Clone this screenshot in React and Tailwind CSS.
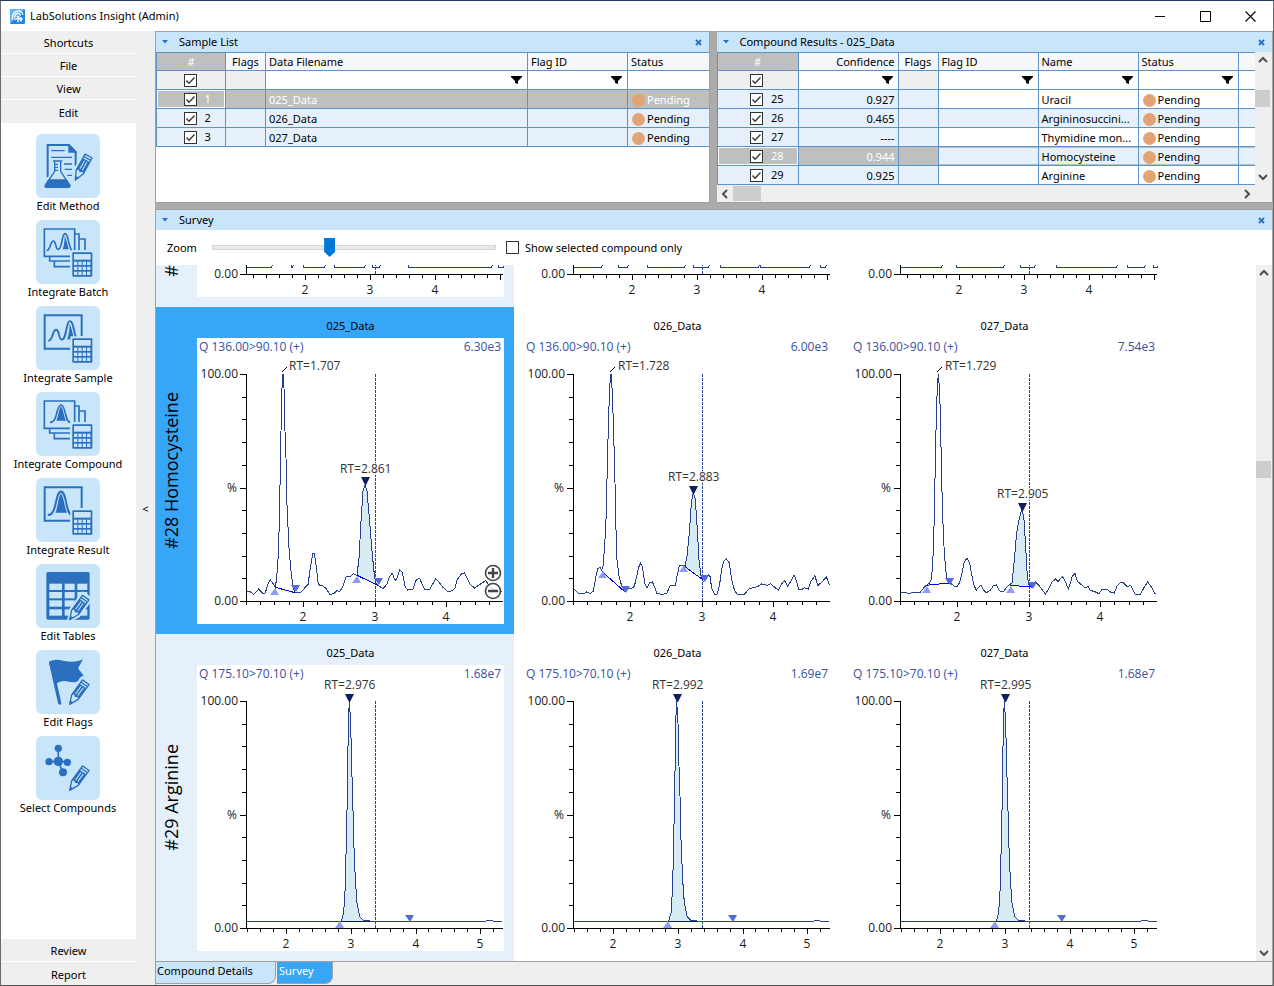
import React, { useState } from 'react';

const TILE = '#c8e5fa';
const INK = '#2b70bf';

/* ---------- Sidebar icons ---------- */

const Pencil = ({ transform }) => (
  <g transform={transform}>
    <path d="M0 0 L-13 -26 V-86 H13 V-26 Z" fill={TILE} stroke={TILE} strokeWidth="14" strokeLinejoin="round" />
    <path d="M0 0 L-12 -27 V-82 H12 V-27 Z" fill={TILE} stroke={INK} strokeWidth="4" strokeLinejoin="round" />
    <path d="M-12 -27 V-68 H12 V-27 L6 -32 L0 -27 L-6 -32 Z" fill={INK} />
    <path d="M-4 -36 V-64 M4 -36 V-64" stroke={TILE} strokeWidth="3" />
    <path d="M-12 -74 H12" stroke={INK} strokeWidth="4" />
    <path d="M0 2 L-6 -11 H6 Z" fill={INK} />
  </g>
);

const Calculator = () => (
  <g>
    <rect x="103" y="91" width="72" height="84" fill={TILE} />
    <rect x="109" y="97" width="60" height="73" rx="3" fill={INK} />
    <rect x="114" y="102" width="50" height="17" fill={TILE} />
    {[125, 140, 155].map((y) =>
      [114, 127, 140, 153].map((x) => (
        <rect key={`${x}-${y}`} x={x} y={y} width="10" height="10" fill={TILE} />
      ))
    )}
  </g>
);

const StackFrame = () => (
  <g fill="none" stroke={INK} strokeWidth="5">
    <path d="M102 109 H25 V27 H116 V90" />
    <path d="M116 42 H129 V90 M129 57 H147 V90" />
    <path d="M41 111 V123 H102 M55 125 V140 H102" />
  </g>
);

const SingleFrame = () => (
  <path d="M102 128 H26 V28 H137 V90" fill="none" stroke={INK} strokeWidth="6" />
);

const TwoPeaks = ({ transform }) => (
  <g transform={transform}>
    <path
      d="M32 91 C44 92 42 63 52 63 C61 63 58 88 66 88 C80 88 76 41 87 41 C98 41 96 80 108 92"
      fill="none"
      stroke={INK}
      strokeWidth="5"
    />
    <path d="M86 47 C91 57 95 75 98 88 L80 88 C85 74 86 60 86 47 Z" fill={INK} />
  </g>
);

const OnePeak = ({ transform }) => (
  <g transform={transform}>
    <path
      d="M42 91 C66 92 60 39 75 39 C90 39 86 91 103 91"
      fill="none"
      stroke={INK}
      strokeWidth="5"
    />
    <path d="M75 43 C82 52 84 75 90 86 L61 86 C67 75 68 52 75 43 Z" fill={INK} />
  </g>
);

const icons = {
  method: (
    <g>
      <path d="M35 130 V33 H99 L119 54 V96" fill="none" stroke={INK} strokeWidth="6" />
      <path d="M97 30 L122 56 H97 Z" fill={INK} />
      <path
        d="M46 50 H86 M46 70 H108 M84 90 H108 M86 106 H108 M94 124 H108"
        stroke={INK}
        strokeWidth="4"
      />
      <path d="M54 82 H75 V112 L100 152 V160 H30 V152 L54 112 Z" fill={TILE} stroke={TILE} strokeWidth="12" />
      <path d="M56 82 V112 L30 151 H99 L74 112 V82" fill={TILE} stroke={INK} strokeWidth="4" />
      <path d="M51 81 H79 M56 91 H66 M56 100 H66 M56 109 H66" stroke={INK} strokeWidth="4" />
      <path d="M37 136 H92 L104 154 Q105 162 97 162 H32 Q23 162 26 154 Z" fill={INK} />
      <Pencil transform="translate(118 138) rotate(29)" />
    </g>
  ),
  batch: (
    <g>
      <StackFrame />
      <TwoPeaks />
      <Calculator />
    </g>
  ),
  sample: (
    <g>
      <SingleFrame />
      <TwoPeaks transform="translate(-1 -3) scale(1.18)" />
      <Calculator />
    </g>
  ),
  compound: (
    <g>
      <StackFrame />
      <OnePeak />
      <Calculator />
    </g>
  ),
  result: (
    <g>
      <SingleFrame />
      <OnePeak transform="translate(-15 -12) scale(1.2 1.35)" />
      <Calculator />
    </g>
  ),
  tables: (
    <g>
      <rect x="31" y="24" width="130" height="143" rx="5" fill={INK} />
      {[59, 84, 109, 136].map((y) =>
        [40, 86, 124].map((x) => (
          <rect key={`${x}-${y}`} x={x} y={y} width={x === 40 ? 38 : 30} height="19" fill={TILE} />
        ))
      )}
      <Pencil transform="translate(101 167) rotate(36)" />
    </g>
  ),
  flags: (
    <g>
      <path d="M44 38 L71 159" stroke={INK} strokeWidth="10" strokeLinecap="round" />
      <path
        d="M39 37 C66 14 92 50 141 28 L126 55 L144 78 C124 80 134 98 112 97 C94 97 82 85 58 103 Z"
        fill={INK}
      />
      <Pencil transform="translate(101 163) rotate(36)" />
    </g>
  ),
  compounds: (
    <g>
      <path d="M67 37 V76 M39 77 H94 M67 76 L81 109" stroke={INK} strokeWidth="5" />
      <g fill={INK}>
        <circle cx="67" cy="37" r="11" />
        <circle cx="39" cy="77" r="11" />
        <circle cx="67" cy="76" r="14" />
        <circle cx="94" cy="79" r="11" />
        <circle cx="81" cy="109" r="12" />
      </g>
      <Pencil transform="translate(101 163) rotate(36)" />
    </g>
  ),
};

const shortcuts = [
  { label: 'Edit Method', icon: 'method' },
  { label: 'Integrate Batch', icon: 'batch' },
  { label: 'Integrate Sample', icon: 'sample' },
  { label: 'Integrate Compound', icon: 'compound' },
  { label: 'Integrate Result', icon: 'result' },
  { label: 'Edit Tables', icon: 'tables' },
  { label: 'Edit Flags', icon: 'flags' },
  { label: 'Select Compounds', icon: 'compounds' },
];

/* ---------- Small shared parts ---------- */

const Checkbox = ({ id, label, defaultChecked = false }) => {
  const [checked, setChecked] = useState(defaultChecked);
  return (
    <span className="relative block h-[13px] w-[13px]">
      <input
        id={id}
        type="checkbox"
        aria-label={label}
        checked={checked}
        onChange={(e) => setChecked(e.target.checked)}
        className="block h-[13px] w-[13px] appearance-none border border-[#333333] bg-white"
      />
      {checked && (
        <svg className="pointer-events-none absolute inset-0" width="13" height="13" viewBox="0 0 13 13">
          <path d="M2.5 6.5 L5 9.2 L10.5 3.5" fill="none" stroke="#333333" strokeWidth="1.3" />
        </svg>
      )}
    </span>
  );
};

const FilterButton = ({ label }) => (
  <button type="button" aria-label={label} className="block">
    <svg width="11" height="9" viewBox="0 0 11 9">
      <path d="M0 0 H11 V1 L7 5 V8 L4 7 V5 L0 1 Z" fill="#000000" />
    </svg>
  </button>
);

const Status = ({ children }) => (
  <span className="flex items-center gap-0.5">
    <span className="h-[13px] w-[13px] rounded-full bg-[#e2a375]" />
    {children}
  </span>
);

const PanelHeader = ({ title }) => (
  <div className="flex h-5 shrink-0 items-center bg-[#c8e5fa] pr-[7px] pl-1.5">
    <svg width="6" height="4" viewBox="0 0 6 4">
      <path d="M0 0 H6 L3 3.5 Z" fill="#2b70bf" />
    </svg>
    <h2 className="ml-[11px] flex-1">{title}</h2>
    <button type="button" aria-label={`Close ${title}`}>
      <svg width="7" height="7" viewBox="0 0 7 7">
        <path d="M1 1 L6 6 M6 1 L1 6" stroke="#2b70bf" strokeWidth="1.8" />
      </svg>
    </button>
  </div>
);

const arrows = {
  up: 'M1 7 L5 3 L9 7',
  down: 'M1 3 L5 7 L9 3',
  left: 'M7 1 L3 5 L7 9',
  right: 'M3 1 L7 5 L3 9',
};

const ScrollArrow = ({ dir }) => (
  <button type="button" aria-label={`Scroll ${dir}`} className="flex h-4 w-4 shrink-0 items-center justify-center">
    <svg width="10" height="10" viewBox="0 0 10 10">
      <path d={arrows[dir]} fill="none" stroke="#505050" strokeWidth="2" />
    </svg>
  </button>
);

/* ---------- Tables ---------- */

const cell = 'border-r border-b border-[#5b93cc] p-0 font-normal whitespace-nowrap';
const headCell = `${cell} h-[18px] bg-[#f5f7f9]`;

const IndexCell = ({ n, selected }) => (
  <td className={`${cell} h-[19px] ${selected ? 'bg-[#bfbfbf] text-white inset-ring inset-ring-white' : 'bg-[#e5f0fa]'}`}>
    <div className="grid grid-cols-[1fr_auto_1fr] items-center pr-0.5">
      <span />
      <Checkbox label={`Select row ${n}`} defaultChecked />
      <span className="pl-2 leading-4">{n}</span>
    </div>
  </td>
);

const FilterCell = ({ name, filter = true }) => (
  <td className={`${cell} h-[19px] bg-white`}>
    <div className="flex justify-end pr-[5px]">{filter && <FilterButton label={`Filter ${name}`} />}</div>
  </td>
);

const IndexFilterCell = () => (
  <td className={`${cell} h-[19px] bg-[#efefef]`}>
    <div className="flex justify-center pr-0.5">
      <Checkbox label="Select all" defaultChecked />
    </div>
  </td>
);

const samples = [
  { n: 1, file: '025_Data', selected: true },
  { n: 2, file: '026_Data' },
  { n: 3, file: '027_Data' },
];

const SampleTable = () => (
  <table className="w-full table-fixed border-separate border-spacing-0 border-t border-l border-[#5b93cc] text-left leading-4">
    <colgroup>
      <col className="w-[69px]" />
      <col className="w-10" />
      <col className="w-[262px]" />
      <col className="w-[100px]" />
      <col />
    </colgroup>
    <thead>
      <tr>
        <th className={`${cell} h-[18px] bg-[#bfbfbf] text-center text-white`}>#</th>
        <th className={`${headCell} text-center`}>Flags</th>
        <th className={`${headCell} pl-[3px]`}>Data Filename</th>
        <th className={`${headCell} pl-[3px]`}>Flag ID</th>
        <th className={`${headCell} border-r-0 pl-[3px]`}>Status</th>
      </tr>
    </thead>
    <tbody>
      <tr>
        <IndexFilterCell />
        <td className={`${cell} bg-[#efefef]`} />
        <FilterCell name="Data Filename" />
        <FilterCell name="Flag ID" />
        <td className={`${cell} border-r-0 bg-white`} />
      </tr>
      {samples.map((row) => (
        <tr key={row.n} className={row.selected ? 'bg-[#bfbfbf] text-white' : 'bg-[#e5f0fa]'}>
          <IndexCell n={row.n} selected={row.selected} />
          <td className={cell} />
          <td className={`${cell} pt-0.5 pl-[3px]`}>{row.file}</td>
          <td className={cell} />
          <td className={`${cell} border-r-0 pt-0.5 pl-1`}>
            <Status>Pending</Status>
          </td>
        </tr>
      ))}
    </tbody>
  </table>
);

const compounds = [
  { n: 25, confidence: '0.927', name: 'Uracil' },
  { n: 26, confidence: '0.465', name: 'Argininosuccini...' },
  { n: 27, confidence: '----', name: 'Thymidine mon...' },
  { n: 28, confidence: '0.944', name: 'Homocysteine', selected: true },
  { n: 29, confidence: '0.925', name: 'Arginine' },
];

const CompoundTable = () => (
  <table className="w-full table-fixed border-separate border-spacing-0 border-t border-l border-[#5b93cc] text-left leading-4">
    <colgroup>
      <col className="w-[81px]" />
      <col className="w-[100px]" />
      <col className="w-10" />
      <col className="w-[100px]" />
      <col className="w-[100px]" />
      <col className="w-[100px]" />
      <col />
    </colgroup>
    <thead>
      <tr>
        <th className={`${cell} h-[18px] bg-[#bfbfbf] text-center text-white`}>#</th>
        <th className={`${headCell} pr-[3px] text-right`}>Confidence</th>
        <th className={`${headCell} text-center`}>Flags</th>
        <th className={`${headCell} pl-[3px]`}>Flag ID</th>
        <th className={`${headCell} pl-[3px]`}>Name</th>
        <th className={`${headCell} pl-[3px]`}>Status</th>
        <th className={`${headCell} border-r-0`} />
      </tr>
    </thead>
    <tbody>
      <tr>
        <IndexFilterCell />
        <FilterCell name="Confidence" />
        <td className={`${cell} bg-[#efefef]`} />
        <FilterCell name="Flag ID" />
        <FilterCell name="Name" />
        <FilterCell name="Status" />
        <td className={`${cell} border-r-0 bg-white`} />
      </tr>
      {compounds.map((row, i) => {
        const fixed = row.selected ? 'bg-[#bfbfbf] text-white' : 'bg-[#e5f0fa]';
        const body = i % 2 ? 'bg-[#e5f0fa]' : 'bg-white';
        const edge = row.selected ? 'shadow-[inset_0_1px_#bfbfbf,inset_0_-1px_#bfbfbf]' : '';
        return (
          <tr key={row.n}>
            <IndexCell n={row.n} selected={row.selected} />
            <td className={`${cell} ${fixed} pt-0.5 pr-[3px] text-right`}>{row.confidence}</td>
            <td className={`${cell} ${fixed}`} />
            <td className={`${cell} ${body} ${edge}`} />
            <td className={`${cell} ${body} ${edge} overflow-hidden pt-0.5 pl-[3px]`}>{row.name}</td>
            <td className={`${cell} ${body} ${edge} pt-0.5 pl-1`}>
              <Status>Pending</Status>
            </td>
            <td className={`${cell} ${body} ${edge} border-r-0`} />
          </tr>
        );
      })}
    </tbody>
  </table>
);

/* ---------- Chromatograms ---------- */

// Plot area inside the 307 x 286 chart box
const LEFT = 49;
const TOP = 36;
const BASE = 263;
const RIGHT = 306;
const HEIGHT = 286;

// Traces are stored as x,y pairs at three units per pixel, from the given origin
const toPoints = (trace) => {
  const values = trace.data.split(' ').map((pair) => pair.split(',').map(Number));
  return values.map(([x, y]) => [LEFT + (x - trace.x0) / 3, BASE - (trace.y0 - y) / 3]);
};

const toPath = (points) => `M${points.map((p) => p.join(' ')).join(' L')}`;

const homocysteine = [
  {
    file: '025_Data',
    scale: '6.30e3',
    selected: true,
    trace: {
      x0: 289,
      y0: 739,
      data: '289,711 298,709 312,719 320,711 327,703 340,717 347,715 354,690 361,675 368,683 377,698 381,670 386,600 389,500 392,340 394,230 397,100 400,58 403,100 406,230 409,310 412,450 418,580 424,650 431,700 436,714 442,713 455,712 465,700 475,690 482,640 489,597 494,596 499,630 506,690 520,694 530,702 540,719 553,717 562,708 570,711 580,695 590,665 603,665 612,657 622,662 628,610 634,500 640,410 646,390 652,410 660,500 667,590 674,660 678,685 685,692 700,702 712,688 718,670 727,655 737,678 742,670 750,646 758,652 766,695 774,706 790,703 800,675 810,671 818,690 825,705 840,704 848,690 858,673 868,682 880,698 892,709 905,709 916,701 922,675 935,658 944,655 950,665 962,690 975,700 990,690 1008,678 1025,700 1045,712 1057,710',
      fill: [622, 682],
    },
    baselines: [[377, 698, 436, 714], [622, 662, 685, 692]],
    marks: [['start', 77, 250], ['end', 98, 247], ['start', 159, 238], ['end', 181, 240]],
    leader: 86,
    labels: [{ x: 92, y: 32, rt: '1.707' }, { x: 143, y: 135, rt: '2.861' }],
    apex: [168, 139],
  },
  {
    file: '026_Data',
    scale: '6.00e3',
    trace: {
      x0: 176,
      y0: 904,
      data: '176,866 183,872 192,882 208,883 217,877 228,881 237,875 245,830 250,808 257,802 262,812 266,800 271,740 275,660 279,500 281,420 284,320 287,250 290,222 294,280 298,400 302,550 304,660 308,780 314,830 321,855 330,875 338,868 350,867 360,860 366,835 372,805 379,790 385,805 391,850 398,866 406,848 414,847 420,860 428,882 445,884 458,880 466,860 474,856 483,857 489,825 495,798 505,797 512,798 518,770 525,700 531,610 537,577 543,600 549,690 554,780 560,830 567,845 575,838 581,825 587,830 592,865 600,883 608,883 615,860 622,810 628,785 636,778 645,790 652,840 660,870 668,883 690,884 705,867 730,861 742,853 758,857 768,852 778,860 792,872 800,855 810,842 820,860 829,845 839,825 845,840 853,870 862,870 870,864 882,868 890,845 902,828 910,858 925,845 936,831 945,855',
      fill: [510, 562],
    },
    baselines: [[262, 815, 330, 875], [508, 798, 565, 840]],
    marks: [['start', 78, 233], ['end', 101, 248], ['start', 159, 227], ['end', 180, 237]],
    leader: 87,
    labels: [{ x: 94, y: 32, rt: '1.728' }, { x: 144, y: 143, rt: '2.883' }],
    apex: [169, 148],
  },
  {
    file: '027_Data',
    scale: '7.54e3',
    trace: {
      x0: 181,
      y0: 904,
      data: '181,877 195,878 205,881 225,879 240,880 252,865 260,857 270,850 276,835 280,770 284,650 287,480 290,350 293,260 296,222 300,275 303,380 305,500 309,650 313,740 318,810 323,845 328,850 336,853 345,860 352,862 360,848 366,825 373,790 382,774 390,790 396,825 404,860 410,871 424,856 432,872 440,879 452,872 462,857 470,856 480,874 490,877 502,862 510,855 517,850 524,780 531,700 538,660 547,625 553,660 558,740 563,830 568,855 576,862 587,846 596,855 606,868 617,883 627,868 636,848 648,838 656,846 663,835 670,831 677,845 686,868 692,850 698,830 706,821 713,845 725,855 736,865 745,860 752,872 765,876 778,882 787,870 800,868 815,879 824,880 832,860 842,848 852,850 862,860 873,858 886,883 902,884 914,862 924,847 934,860 945,880 950,884',
      fill: [510, 576],
    },
    baselines: [[258, 857, 330, 850], [512, 857, 576, 862]],
    marks: [['start', 75, 248], ['end', 98, 240], ['start', 159, 248], ['end', 181, 244]],
    leader: 87,
    labels: [{ x: 94, y: 32, rt: '1.729' }, { x: 146, y: 160, rt: '2.905' }],
    apex: [171, 165],
  },
];

const ARGININE =
  '289,844 575,844 582,820 587,740 590,600 593,470 596,250 599,184 603,250 606,380 609,470 612,600 617,720 622,790 630,830 640,841 660,844 1010,844 1020,841 1030,844 1056,844';

const arginine = [
  { file: '025_Data', scale: '1.68e7', x0: 289, start: 142, end: 212, label: 127, rt: '2.976', apex: 152 },
  { file: '026_Data', scale: '1.69e7', x0: 288, start: 143, end: 208, label: 128, rt: '2.992', apex: 153 },
  { file: '027_Data', scale: '1.68e7', x0: 286, start: 143, end: 210, label: 129, rt: '2.995', apex: 154 },
].map((c) => ({
  ...c,
  trace: { x0: c.x0, y0: 865, data: ARGININE, fill: [575, 660] },
  baselines: [[575, 844, 660, 844]],
  marks: [['start', c.start, 256], ['end', c.end, 250]],
  labels: [{ x: c.label, y: 24, rt: c.rt }],
  apex: [c.apex, 29],
}));

// Only the floor of the signal, given as [from, to] spans
const thymidine = [
  { file: '025_Data', floor: [[49, 74], [94, 95], [106, 127], [137, 167], [175, 182], [211, 294], [301, 306]] },
  { file: '026_Data', floor: [[49, 77], [94, 103], [123, 160], [169, 184], [196, 234], [236, 285], [296, 301]] },
  { file: '027_Data', floor: [[49, 90], [105, 152], [169, 183], [205, 265], [276, 293], [302, 306]] },
];

const rows = [
  {
    title: '#',
    charts: thymidine,
    // scrolled under the toolbar, only the foot of the charts shows
    visible: 32,
    axis: { origin: 108, step: 13, first: 4, labels: [2, 3, 4] },
  },
  {
    title: '#28 Homocysteine',
    transition: 'Q 136.00>90.10 (+)',
    charts: homocysteine,
    selected: true,
    axis: { origin: 106, step: 14.3, first: 4, labels: [2, 3, 4] },
  },
  {
    title: '#29 Arginine',
    transition: 'Q 175.10>70.10 (+)',
    charts: arginine,
    axis: { origin: 89, step: 12.95, first: 3, labels: [2, 3, 4, 5] },
  },
];

const Mark = ({ kind, x, y }) =>
  kind === 'start' ? (
    <path d={`M${x - 4} ${y + 7} L${x + 1} ${y} L${x + 5} ${y + 7} Z`} fill="#8c9cf8" />
  ) : (
    <path d={`M${x - 4} ${y} L${x + 5} ${y} L${x + 1} ${y + 7} Z`} fill="#5468d8" />
  );

const Axis = ({ axis, partial }) => {
  const ticks = [];
  for (let i = -axis.first; axis.origin + i * axis.step <= RIGHT; i++) {
    ticks.push({ x: Math.round(axis.origin + i * axis.step) + 0.5, major: i % 5 === 0 });
  }
  return (
    <g>
      <g stroke="#000000" shapeRendering="crispEdges">
        <path d={`M${LEFT + 0.5} ${TOP} V${BASE + 1} M${LEFT - 6} ${BASE + 0.5} H${RIGHT}`} />
        {[...Array(11)].map((_, i) => (
          <path
            key={i}
            d={`M${i % 5 ? LEFT - 4 : LEFT - 6} ${Math.round(TOP + i * 22.7) + 0.5} H${LEFT}`}
          />
        ))}
        {ticks.map((t) => (
          <path key={t.x} d={`M${t.x} ${BASE} V${BASE + (t.major ? 6 : 4)}`} />
        ))}
      </g>
      <g fill="#1a1a1a" fontSize="12">
        {!partial && <text x="41" y={TOP + 4} textAnchor="end">100.00</text>}
        {!partial && <text x="40" y="154" textAnchor="end">%</text>}
        <text x="41" y={BASE + 4} textAnchor="end">0.00</text>
        {axis.labels.map((n, i) => (
          <text key={n} x={Math.round(axis.origin + i * axis.step * 5)} y="283" textAnchor="middle">
            {n}
          </text>
        ))}
      </g>
    </g>
  );
};

const Chart = ({ chart, row }) => {
  const { trace } = chart;
  const height = row.visible || HEIGHT;
  const points = trace ? toPoints(trace) : [];
  const local = (x, y) => [LEFT + (x - trace.x0) / 3, BASE - (trace.y0 - y) / 3];
  const peak = trace
    ? points.filter(([x]) => x >= local(trace.fill[0], 0)[0] && x <= local(trace.fill[1], 0)[0])
    : [];

  return (
    <svg
      width="307"
      height={height}
      viewBox={`0 ${HEIGHT - height} 307 ${height}`}
      className="block bg-white font-['Open_Sans','Noto_Sans',sans-serif]"
      role="img"
      aria-label={`${row.title} ${chart.file}`}
    >
      {trace && <path d={`${toPath(peak)} Z`} fill="#d6ebf2" />}
      <path d="M178.5 36 V263" stroke="#2446a8" strokeDasharray="3 1" shapeRendering="crispEdges" />
      {trace && (
        <g fill="none" shapeRendering="crispEdges">
          <path d={toPath(points)} stroke="#27408b" />
          {chart.baselines.map(([x1, y1, x2, y2]) => (
            <path key={x1} d={toPath([local(x1, y1), local(x2, y2)])} stroke="#0000e6" />
          ))}
        </g>
      )}
      {chart.floor && (
        <g stroke="#27408b" fill="none" shapeRendering="crispEdges">
          {chart.floor.map(([a, b]) => (
            <path key={a} d={`M${a} 240 V255 L${a + 1} 256.5 H${b} L${b + 1} 255 V240`} />
          ))}
        </g>
      )}
      {chart.marks?.map(([kind, x, y]) => (
        <Mark key={`${kind}${x}`} kind={kind} x={x} y={y} />
      ))}
      <Axis axis={row.axis} partial={Boolean(row.visible)} />
      {chart.leader && (
        <path
          d={`M${chart.leader - 1} 34 L${chart.leader + 4} 29`}
          stroke="#000000"
          shapeRendering="crispEdges"
        />
      )}
      {chart.apex && (
        <path
          d={`M${chart.apex[0] - 4} ${chart.apex[1]} h9 l-4 8 h-1 Z`}
          fill="#0f1f5c"
        />
      )}
      {chart.labels?.map((l) => (
        <g key={l.rt} fontSize="12">
          <rect x={l.x} y={l.y - 10} width="52" height="12" fill="#ffffff" opacity="0.7" />
          <text x={l.x} y={l.y} fill="#333333">{`RT=${l.rt}`}</text>
        </g>
      ))}
      {row.transition && (
        <g fill="#3a4fa0" fontSize="12">
          <text x="2" y="13">{row.transition}</text>
          <text x="304" y="13" textAnchor="end">{chart.scale}</text>
        </g>
      )}
      {chart.selected && (
        <g fill="#ffffff" fillOpacity="0.85" stroke="#444444" strokeWidth="1.6">
          <circle cx="296" cy="235" r="7.5" />
          <circle cx="296" cy="253" r="7.5" />
          <path d="M291 235 H301 M296 230 V240 M291 253 H301" strokeWidth="2.4" />
        </g>
      )}
    </svg>
  );
};

const SurveyRow = ({ row }) => (
  <section className="flex shrink-0">
    {row.charts.map((chart, i) => {
      const first = i === 0;
      const tint = row.selected ? 'bg-[#38a6f7]' : 'bg-[#e5f0fa]';
      return (
        <div key={chart.file} className={`flex pr-2.5 pb-2.5 ${first ? tint : 'pl-2.5'}`}>
          {first && (
            <div
              className={`flex w-[41px] justify-center pr-3 ${row.visible ? 'items-start' : 'items-center pt-2.5'}`}
            >
              <h3 className="rotate-180 font-['Open_Sans','Noto_Sans',sans-serif] text-[18px] leading-6 whitespace-nowrap [writing-mode:vertical-rl]">
                {row.title}
              </h3>
            </div>
          )}
          <div>
            {!row.visible && (
              <div className="flex h-[31px] items-center justify-center pt-[7px]">{chart.file}</div>
            )}
            <Chart chart={chart} row={row} />
          </div>
        </div>
      );
    })}
  </section>
);

/* ---------- Window ---------- */

const TitleBar = () => (
  <header className="flex h-[30px] shrink-0 items-center bg-white pl-[9px]">
    <svg width="15" height="15" viewBox="0 0 45 45">
      <rect width="45" height="45" rx="4" fill="#1f86e0" />
      <path d="M0 45 V4 Q0 0 4 0 H45 L20 22 Z" fill="#5fb4f5" />
      <path
        d="M8 32 C4 12 18 6 26 6 C34 6 38 12 38 17 M14 26 C14 16 20 13 25 13 C30 13 31 17 31 20 M20 24 C26 18 30 24 24 27 L13 32 M24 40 V30 M24 30 H38 M33 24 V38"
        fill="none"
        stroke="#ffffff"
        strokeWidth="4"
      />
    </svg>
    <h1 className="ml-[5px] flex-1">LabSolutions Insight (Admin)</h1>
    <div className="flex">
      <button type="button" aria-label="Minimize" className="flex h-[30px] w-[45px] items-center justify-center">
        <svg width="11" height="11" viewBox="0 0 11 11">
          <path d="M0 5.5 H10" stroke="#000000" />
        </svg>
      </button>
      <button type="button" aria-label="Maximize" className="flex h-[30px] w-[45px] items-center justify-center">
        <svg width="11" height="11" viewBox="0 0 11 11">
          <path d="M0.5 0.5 H10.5 V10.5 H0.5 Z" fill="none" stroke="#000000" />
        </svg>
      </button>
      <button type="button" aria-label="Close" className="flex h-[30px] w-[45px] items-center justify-center">
        <svg width="11" height="11" viewBox="0 0 11 11">
          <path d="M0.5 0.5 L10.5 10.5 M10.5 0.5 L0.5 10.5" fill="none" stroke="#000000" strokeWidth="1.1" />
        </svg>
      </button>
    </div>
  </header>
);

const NavButton = ({ children }) => (
  <button type="button" className="h-[23px] shrink-0 border-b border-white bg-[#efefef] pt-0.5 last:border-b-0">
    {children}
  </button>
);

const Sidebar = () => (
  <nav className="flex w-[135px] shrink-0 flex-col bg-white">
    <div className="flex flex-col">
      {['Shortcuts', 'File', 'View', 'Edit'].map((item) => (
        <NavButton key={item}>{item}</NavButton>
      ))}
    </div>
    <div className="flex flex-1 flex-col gap-1.5 pt-[11px] pr-px">
      {shortcuts.map((s) => (
        <button key={s.label} type="button" className="flex flex-col items-center leading-4">
          <svg width="64" height="64" viewBox="0 0 192 192" className="rounded-md bg-[#c8e5fa]">
            {icons[s.icon]}
          </svg>
          {s.label}
        </button>
      ))}
    </div>
    <div className="flex flex-col">
      <NavButton>Review</NavButton>
      <NavButton>Report</NavButton>
    </div>
  </nav>
);

const App = () => {
  const [zoom, setZoom] = useState(41);

  return (
    <div className="flex h-screen flex-col overflow-hidden border border-t-[#1d3d5f] border-r-[#6b6b6b] border-b-[#555555] border-l-[#6b6b6b] bg-[#efefef] font-['Noto_Sans','Open_Sans',sans-serif] text-[11px] leading-4 text-black">
      <TitleBar />
      <div className="flex min-h-0 flex-1">
        <Sidebar />
        <button type="button" aria-label="Collapse sidebar" className="w-[19px] shrink-0 pt-0.5">
          &lt;
        </button>

        <main className="flex min-w-0 flex-1 flex-col gap-1.5 bg-[#ababab]">
          <div className="flex h-[172px] shrink-0 gap-[7px]">
            {/* Sample List */}
            <section className="min-w-0 flex-[554] overflow-hidden border border-[#a0a0a0] bg-white">
              <PanelHeader title="Sample List" />
              <SampleTable />
            </section>

            {/* Compound Results */}
            <section className="flex min-w-0 flex-[557] flex-col overflow-hidden border border-l-0 border-[#a0a0a0] bg-white">
              <PanelHeader title="Compound Results - 025_Data" />
              <div className="flex flex-1">
                <div className="min-w-0 flex-1">
                  <CompoundTable />
                </div>
                <div className="flex w-[17px] flex-col items-center bg-[#efefef] pr-0.5">
                  <ScrollArrow dir="up" />
                  <div className="mt-[22px] h-[17px] w-[15px] bg-[#cdcdcd]" />
                  <div className="flex-1" />
                  <ScrollArrow dir="down" />
                </div>
              </div>
              <div className="flex h-[17px] items-center bg-[#efefef] pr-[17px]">
                <ScrollArrow dir="left" />
                <div className="h-[15px] w-7 bg-[#cdcdcd]" />
                <div className="flex-1" />
                <ScrollArrow dir="right" />
              </div>
            </section>
          </div>

          {/* Survey */}
          <section className="flex min-h-0 flex-1 flex-col border border-b-0 border-[#a0a0a0] bg-white">
            <PanelHeader title="Survey" />
            <div className="flex h-[35px] shrink-0 items-center pl-[11px]">
              <label htmlFor="zoom" className="w-[45px]">Zoom</label>
              <input
                id="zoom"
                type="range"
                min="0"
                max="100"
                value={zoom}
                onChange={(e) => setZoom(Number(e.target.value))}
                className="h-5 w-[284px] appearance-none bg-transparent [&::-webkit-slider-runnable-track]:h-[5px] [&::-webkit-slider-runnable-track]:border [&::-webkit-slider-runnable-track]:border-[#d6d6d6] [&::-webkit-slider-runnable-track]:bg-[#e7eaea] [&::-webkit-slider-thumb]:-mt-2 [&::-webkit-slider-thumb]:h-[19px] [&::-webkit-slider-thumb]:w-[11px] [&::-webkit-slider-thumb]:appearance-none [&::-webkit-slider-thumb]:bg-[#0078d7] [&::-webkit-slider-thumb]:[clip-path:polygon(0_0,100%_0,100%_72%,50%_100%,0_72%)]"
              />
              <div className="ml-2.5 flex items-center gap-1.5">
                <Checkbox id="selected-only" />
                <label htmlFor="selected-only">Show selected compound only</label>
              </div>
            </div>

            <div className="flex min-h-0 flex-1">
              <div className="flex min-w-0 flex-1 flex-col justify-end overflow-hidden">
                {rows.map((row) => (
                  <SurveyRow key={row.title} row={row} />
                ))}
              </div>
              <div className="flex w-4 shrink-0 flex-col items-center bg-[#efefef] pr-px">
                <ScrollArrow dir="up" />
                <div className="flex-[180]" />
                <div className="h-[17px] w-[15px] bg-[#cdcdcd]" />
                <div className="flex-[467]" />
                <ScrollArrow dir="down" />
              </div>
            </div>

            <div className="flex h-6 shrink-0 items-start gap-px border-t border-[#a0a0a0] bg-[#efefef]">
              <button
                type="button"
                className="h-[22px] w-[120px] rounded-br-lg border-r border-b border-[#a0a0a0] bg-[#c8e5fa] pb-1 pl-px text-left"
              >
                Compound Details
              </button>
              <button
                type="button"
                className="h-[22px] w-14 rounded-br-lg border-r border-b border-[#a0a0a0] bg-[#38a6f7] pb-1 pl-0.5 text-left text-white"
              >
                Survey
              </button>
            </div>
          </section>
        </main>
      </div>
    </div>
  );
};

export default App;
